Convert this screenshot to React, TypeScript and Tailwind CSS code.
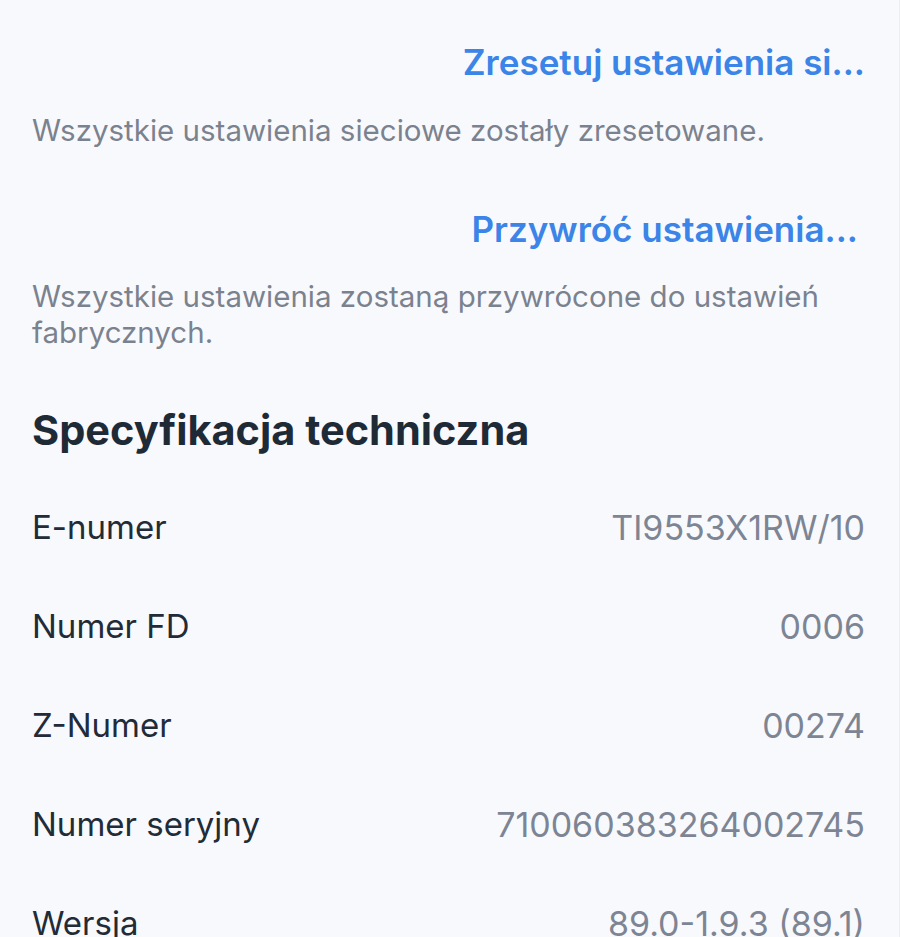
const rows = [
  { label: 'E-numer', value: 'TI9553X1RW/10' },
  { label: 'Numer FD', value: '0006' },
  { label: 'Z-Numer', value: '00274' },
  { label: 'Numer seryjny', value: '710060383264002745' },
  { label: 'Wersja', value: '89.0-1.9.3 (89.1)' },
];

export default function App() {
  return (
    <div
      className="h-[937px] w-[900px] overflow-hidden bg-[#f8f9fc] border-r border-[#eceef2]"
      style={{ fontFamily: 'Inter, "Noto Sans", sans-serif' }}
    >
      <div className="pl-[32px] pr-[34px] pt-[42px]">
        <div className="flex justify-end">
          <button className="text-[35px] leading-[40px] font-semibold text-[#3b84e8]">
            Zresetuj ustawienia si...
          </button>
        </div>
        <p className="mt-[30px] text-[29.5px] leading-[36px] text-[#7b828f]">
          Wszystkie ustawienia sieciowe zostały zresetowane.
        </p>

        <div className="mt-[61px] flex justify-end pr-[7px]">
          <button className="text-[35px] leading-[40px] font-semibold text-[#3b84e8]">
            Przywróć ustawienia...
          </button>
        </div>
        <p className="mt-[29px] text-[29.5px] leading-[36px] text-[#7b828f]">
          Wszystkie ustawienia zostaną przywrócone do ustawień fabrycznych.
        </p>

        <h2 className="mt-[56px] text-[41.5px] leading-[48px] font-bold text-[#1f2a37]">
          Specyfikacja techniczna
        </h2>

        <div className="mt-[24px]">
          {rows.map((row) => (
            <div key={row.label} className="flex h-[99px] items-center justify-between">
              <span className="text-[33px] text-[#222b38]">{row.label}</span>
              <span className="text-[34px] text-[#7d8594]">{row.value}</span>
            </div>
          ))}
        </div>
      </div>
    </div>
  );
}
